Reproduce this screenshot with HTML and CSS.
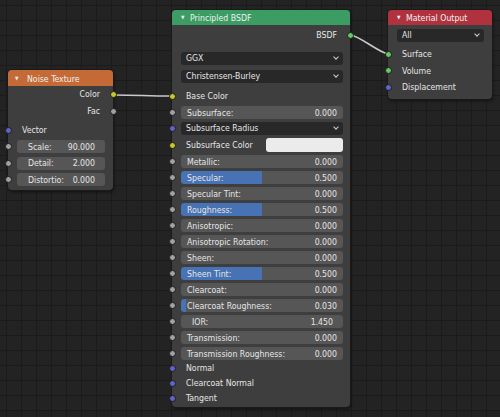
FILE: index.html
```html
<!DOCTYPE html>
<html lang="en">
<head>
    <meta charset="UTF-8">
    <title>Shader Editor</title>
    <link rel="stylesheet" href="styles.css">
</head>
<body>
<div class="canvas">

    <svg class="links" width="500" height="417" viewBox="0 0 500 417">
        <path d="M113 95 C 140 95, 145 96, 172 96" />
        <path d="M351 35 C 361 37, 378 52, 388 54" />
    </svg>

    <!-- Noise Texture -->
    <div class="node noise">
        <div class="head"><span class="tri">▼</span>Noise Texture</div>
        <div class="row out">Color<span class="sock right yellow"></span></div>
        <div class="row out">Fac<span class="sock right grey"></span></div>
        <div class="row in vec">Vector<span class="sock left purple"></span></div>
        <div class="frow"><span class="sock left grey"></span>
            <div class="field spread"><span>Scale:</span><span>90.000</span></div>
        </div>
        <div class="frow"><span class="sock left grey"></span>
            <div class="field spread"><span>Detail:</span><span>2.000</span></div>
        </div>
        <div class="frow"><span class="sock left grey"></span>
            <div class="field spread"><span>Distortio:</span><span>0.000</span></div>
        </div>
    </div>

    <!-- Principled BSDF -->
    <div class="node bsdf">
        <div class="head"><span class="tri">▼</span>Principled BSDF</div>
        <div class="row out">BSDF<span class="sock right green"></span></div>
        <div class="drow first"><div class="menu">GGX<span class="chev"></span></div></div>
        <div class="drow"><div class="menu">Christensen-Burley<span class="chev"></span></div></div>
        <div class="row in">Base Color<span class="sock left yellow"></span></div>

        <div class="frow"><span class="sock left grey"></span>
            <div class="field"><span>Subsurface:</span><span>0.000</span></div>
        </div>
        <div class="frow"><span class="sock left purple"></span>
            <div class="menu">Subsurface Radius<span class="chev"></span></div>
        </div>
        <div class="frow colrow"><span class="sock left yellow"></span>
            <span class="clabel">Subsurface Color</span><span class="swatch"></span>
        </div>
        <div class="frow"><span class="sock left grey"></span>
            <div class="field"><span>Metallic:</span><span>0.000</span></div>
        </div>
        <div class="frow"><span class="sock left grey"></span>
            <div class="field"><i class="fill" style="width:50%"></i><span>Specular:</span><span>0.500</span></div>
        </div>
        <div class="frow"><span class="sock left grey"></span>
            <div class="field"><span>Specular Tint:</span><span>0.000</span></div>
        </div>
        <div class="frow"><span class="sock left grey"></span>
            <div class="field"><i class="fill" style="width:50%"></i><span>Roughness:</span><span>0.500</span></div>
        </div>
        <div class="frow"><span class="sock left grey"></span>
            <div class="field"><span>Anisotropic:</span><span>0.000</span></div>
        </div>
        <div class="frow"><span class="sock left grey"></span>
            <div class="field"><span>Anisotropic Rotation:</span><span>0.000</span></div>
        </div>
        <div class="frow"><span class="sock left grey"></span>
            <div class="field"><span>Sheen:</span><span>0.000</span></div>
        </div>
        <div class="frow"><span class="sock left grey"></span>
            <div class="field"><i class="fill" style="width:50%"></i><span>Sheen Tint:</span><span>0.500</span></div>
        </div>
        <div class="frow"><span class="sock left grey"></span>
            <div class="field"><span>Clearcoat:</span><span>0.000</span></div>
        </div>
        <div class="frow"><span class="sock left grey"></span>
            <div class="field"><i class="fill" style="width:3%"></i><span>Clearcoat Roughness:</span><span>0.030</span></div>
        </div>
        <div class="frow"><span class="sock left grey"></span>
            <div class="field ior"><span>IOR:</span><span>1.450</span></div>
        </div>
        <div class="frow"><span class="sock left grey"></span>
            <div class="field"><span>Transmission:</span><span>0.000</span></div>
        </div>
        <div class="frow"><span class="sock left grey"></span>
            <div class="field"><span>Transmission Roughness:</span><span>0.000</span></div>
        </div>
        <div class="row in tight first-tight">Normal<span class="sock left purple"></span></div>
        <div class="row in tight">Clearcoat Normal<span class="sock left purple"></span></div>
        <div class="row in tight">Tangent<span class="sock left purple"></span></div>
    </div>

    <!-- Material Output -->
    <div class="node output">
        <div class="head"><span class="tri">▼</span>Material Output</div>
        <div class="drow top"><div class="menu">All<span class="chev"></span></div></div>
        <div class="row in surf">Surface<span class="sock left green"></span></div>
        <div class="row in">Volume<span class="sock left green"></span></div>
        <div class="row in">Displacement<span class="sock left purple"></span></div>
    </div>

</div>
</body>
</html>
```

FILE: styles.css
```css
html, body {
    margin: 0;
    padding: 0;
}
body {
    background-color: #232323;
    font-family: "DejaVu Sans Condensed", "DejaVu Sans", sans-serif;
    font-stretch: condensed;
    font-size: 8.7px;
    color: #e6e6e6;
}
.canvas {
    position: relative;
    width: 500px;
    height: 417px;
    overflow: hidden;
    background-color: #232323;
    background-image:
        linear-gradient(to right, #1b1b1b 1px, transparent 1px),
        linear-gradient(to bottom, #1b1b1b 1px, transparent 1px);
    background-size: 15px 15px;
    background-position: 6px 5px;
}
.links {
    position: absolute;
    left: 0;
    top: 0;
}
.links path {
    fill: none;
    stroke: #c9c9c9;
    stroke-width: 1.6;
}

/* nodes */
.node {
    position: absolute;
    background-color: #3e3e3e;
    border-radius: 4px;
    box-shadow: 0 0 0 1px #1a1a1a, 1px 2px 3px rgba(0, 0, 0, 0.5);
    padding-bottom: 3px;
}
.noise {
    left: 8px;
    top: 70px;
    width: 105px;
    padding-bottom: 4px;
}
.bsdf {
    left: 172px;
    top: 10px;
    width: 178px;
    padding-bottom: 1px;
}
.output {
    left: 388px;
    top: 10px;
    width: 104px;
}
.head {
    height: 15px;
    line-height: 15px;
    border-radius: 4px 4px 0 0;
    color: #f0f0f0;
    padding-left: 9px;
    white-space: nowrap;
}
.noise .head {
    height: 16px;
    line-height: 16px;
    background-color: #c46a36;
    padding-left: 7px;
}
.bsdf .head {
    background-color: #3b9d64;
}
.output .head {
    background-color: #b1323f;
}
.tri {
    font-size: 5px;
    display: inline-block;
    vertical-align: 2px;
    width: 9px;
}
.noise .tri {
    width: 12px;
}

/* rows */
.row {
    position: relative;
    height: 16px;
    line-height: 16px;
    white-space: nowrap;
}
.row.out {
    text-align: right;
    padding-right: 13px;
}
.row.in {
    padding-left: 14px;
}
.bsdf .row.out {
    margin-top: 2px;
}
.noise .row {
    height: 17px;
    line-height: 17px;
}
.noise .row.vec {
    margin-top: 2px;
}
.row.tight {
    height: 15px;
    line-height: 15px;
}
.first-tight {
    margin-top: 1px;
}
.output .row {
    height: 16.5px;
    line-height: 16.5px;
}
.output .row.surf {
    margin-top: 4px;
}

.frow {
    position: relative;
    height: 13px;
    margin-top: 3px;
    padding: 0 7px 0 9px;
    display: flex;
    align-items: center;
}
.noise .frow {
    padding: 0 8px 0 9px;
    margin-top: 3.5px;
}
.noise .row.vec + .frow {
    margin-top: 1px;
}
.bsdf .row.in + .frow {
    margin-top: 2px;
}

.drow {
    height: 13px;
    margin-top: 5px;
    padding: 0 7px 0 9px;
}
.drow.first {
    margin-top: 9px;
}
.drow.top {
    margin-top: 4px;
    padding: 0 8px 0 9px;
}
.bsdf .drow + .row.in {
    margin-top: 5px;
}

/* widgets */
.field {
    position: relative;
    flex: 1;
    height: 13px;
    background-color: #565656;
    border-radius: 3px;
    display: flex;
    justify-content: space-between;
    align-items: center;
    padding: 0 6px;
    overflow: hidden;
    white-space: nowrap;
}
.field span {
    position: relative;
}
.field.spread {
    padding: 0 10px 0 11px;
}
.field.ior {
    padding: 0 10px 0 11px;
}
.fill {
    position: absolute;
    left: 0;
    top: 0;
    bottom: 0;
    background-color: #4772b3;
    border-radius: 3px 0 0 3px;
}
.menu {
    position: relative;
    flex: 1;
    height: 13px;
    line-height: 13px;
    background-color: #282828;
    border-radius: 3px;
    padding-left: 5px;
    white-space: nowrap;
}
.chev {
    position: absolute;
    right: 5px;
    top: 3px;
    width: 3px;
    height: 3px;
    border-right: 1px solid #cfcfcf;
    border-bottom: 1px solid #cfcfcf;
    transform: rotate(45deg);
}
.colrow {
    height: 14px;
}
.clabel {
    flex: 1;
    padding-left: 5px;
    white-space: nowrap;
}
.swatch {
    width: 77px;
    height: 14px;
    background-color: #ebebeb;
    border-radius: 3px;
}

/* sockets */
.sock {
    position: absolute;
    top: 50%;
    width: 5px;
    height: 5px;
    margin-top: -3.5px;
    border-radius: 50%;
    border: 1px solid #1c1c1c;
}
.sock.left {
    left: -3.5px;
}
.sock.right {
    right: -3.5px;
}
.yellow { background-color: #c7c729; }
.grey { background-color: #a1a1a1; }
.purple { background-color: #6363c7; }
.green { background-color: #63c763; }
```
